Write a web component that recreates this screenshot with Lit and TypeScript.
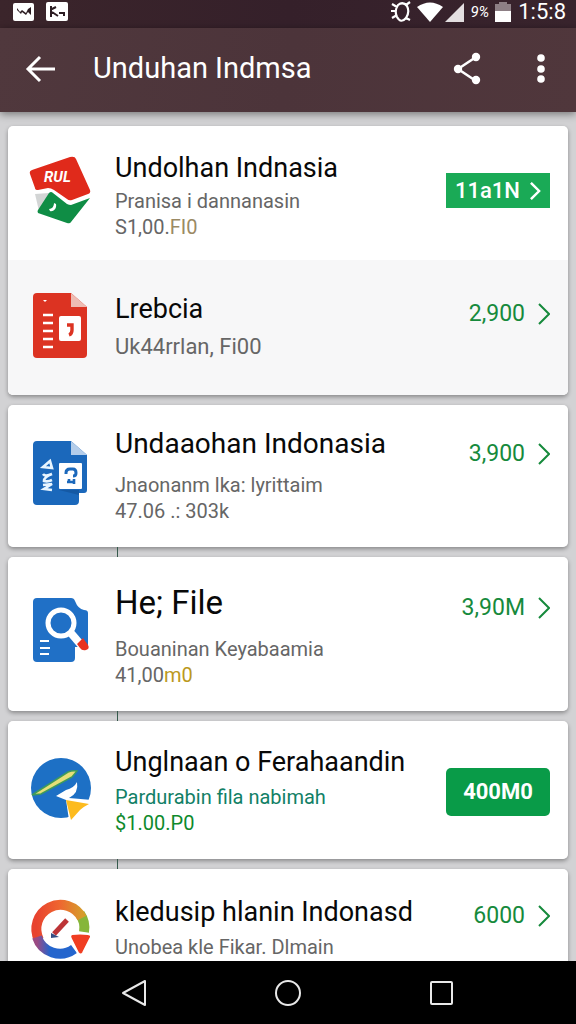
import { LitElement, html, css, svg, nothing, type TemplateResult } from "lit";
import { customElement } from "lit/decorators.js";

interface Line {
  text: string;
  accent?: string;
}

interface Item {
  kind: string;
  icon: TemplateResult;
  title: string;
  lines: Line[];
  value: string;
  badge?: "flat" | "round";
}

const pic = (label: string, body: unknown) =>
  html`<svg class="icon" viewBox="0 0 64 64" role="img" aria-label=${label}>${body}</svg>`;

const folded = pic("RUL", svg`
  <path d="M7 35l14-1 2 3-12 15z" fill="#d3d5d5"/>
  <path d="M2 15q-1-3 2-4L42-2q5-1 6 2l14 31q1 3-2 4l-16 6q-3 1-5-1L26 31q-3-2-6-2l-10 2q-3 0-3-2z" fill="#e02a1b"/>
  <path d="M10 54q-1-2 0-3l11-17q2-2 4 0l14 11q2 1 4 1l19-7-19 24q-1 2-4 1z" fill="#0f8d45"/>
  <path d="M21 50c4 0 5-4 5-6l2 1c1 5-3 8-6 7z" fill="#fff"/>
  <text x="16" y="23" class="glyph" fill="#fff">RUL</text>`);

const redDoc = pic("PDF", svg`
  <path d="M9 0h34l16 14v47q0 4-4 4H9q-4 0-4-4V4q0-4 4-4z" fill="#dc3322"/>
  <path d="M43 0l16 14H43z" fill="#eebcb3"/>
  <path d="M15 7h4l-2 2z" fill="#fff"/>
  <path d="M15 22h10M15 30h10M15 38h10M15 46h10M15 54h10" stroke="#fff" stroke-width="2.4"/>
  <rect x="31" y="23" width="22" height="25" rx="2" fill="#fff"/>
  <path d="M39 32h5v5q0 4-3 5" fill="none" stroke="#dc3322" stroke-width="3.4"/>`);

const blueDoc = pic("Dokumen", svg`
  <path d="M9 0h34l16 14v35q0 3-3 3h-5v8q0 4-4 4H9q-4 0-4-4V4q0-4 4-4z" fill="#1b68bb"/>
  <path d="M43 0l16 14H43z" fill="#b4cdea"/>
  <path d="M31 49h20v5z" fill="#1559a4"/>
  <rect x="31" y="22" width="23" height="26" rx="1" fill="#fff"/>
  <path d="M38 33v-1q0-4 4-4h3q3 0 3 4 0 3-3 3" fill="none" stroke="#1b68bb" stroke-width="3"/>
  <path d="M39 41h8M41 38v3M46 38v5" fill="none" stroke="#1b68bb" stroke-width="2.6"/>
  <path d="M22 20l-7 6 9 1zM15 33q2 3 9 0-8 3-8 7 4 1 8-1M15 44l9-1-8 5 8 1" fill="none" stroke="#e8f5ff" stroke-width="2.6"/>`);

const searchDoc = pic("Cari berkas", svg`
  <path d="M9 0h34q3 0 4 3 3 8 9 9 4 0 4 3v34H47v11q0 4-4 4H9q-4 0-4-4V4q0-4 4-4z" fill="#2070c6"/>
  <path d="M42 34L54 48" stroke="#fff" stroke-width="8"/>
  <circle cx="33" cy="25" r="13" fill="#2070c6" stroke="#fff" stroke-width="5"/>
  <path d="M49 46l6-6 5 7q2 4-2 5-4 1-6-2z" fill="#e8321f"/>
  <path d="M12 43h9M12 50h10M12 56h9" stroke="#fff" stroke-width="2"/>`);

const plane = pic("Kirim", svg`
  <circle cx="33" cy="32" r="30" fill="#1d70c5"/>
  <path d="M4 39L40 16q5-2 9-1l-5 6L13 38z" fill="#e5df77" stroke="#3e9a5c" stroke-width="1.5"/>
  <path d="M28 40l10-6q8-2 11-8 2 11-8 16l23 2v7L52 64H41l-3-20z" fill="#fff"/>
  <path d="M38 44l23 4q-6 3-9 6l-9 10z" fill="#fdbb1e"/>`);

const gauge = pic("Pengukur", svg`
  <defs>
    <linearGradient id="warm" x1="0" x2="1"><stop offset="0" stop-color="#e8432f"/><stop offset=".5" stop-color="#ef6530"/><stop offset="1" stop-color="#d79b2c"/></linearGradient>
    <linearGradient id="cool" x1="0" x2="1"><stop offset="0" stop-color="#9b4a83"/><stop offset=".35" stop-color="#2465cd"/></linearGradient>
  </defs>
  <g fill="none" stroke-width="10">
    <path d="M52 18A24 24 0 0 1 56 36" stroke="#86b63a"/>
    <path d="M11 44A24 24 0 0 1 54 22" stroke="url(#warm)"/>
    <path d="M9 41A24 24 0 0 0 46 53" stroke="url(#cool)"/>
  </g>
  <path d="M26 38L39 24" stroke="#bd3437" stroke-width="5"/>
  <path d="M23 37l8 4-8 1z" fill="#344e83"/>
  <path d="M44 38q8-1 16 0 5 1 2 5l-7 14q-2 3-5 0l-7-14q-2-4 1-5z" fill="#f03e22" stroke="#fff" stroke-width="2"/>`);

const chevron = html`<svg class="chevron" viewBox="0 0 12 22" aria-hidden="true"><path d="M1 1l10 10L1 21"/></svg>`;

const GROUPS: Item[][] = [
  [
    { kind: "lead", icon: folded, title: "Undolhan Indnasia", lines: [{ text: "Pranisa i dannanasin" }, { text: "S1,00.", accent: "FI0" }], value: "11a1N", badge: "flat" },
    { kind: "single", icon: redDoc, title: "Lrebcia", lines: [{ text: "Uk44rrlan, Fi00" }], value: "2,900" },
  ],
  [{ kind: "document", icon: blueDoc, title: "Undaaohan Indonasia", lines: [{ text: "Jnaonanm lka: lyrittaim" }, { text: "47.06 .: 303k" }], value: "3,900" }],
  [{ kind: "search", icon: searchDoc, title: "He; File", lines: [{ text: "Bouaninan Keyabaamia" }, { text: "41,00", accent: "m0" }], value: "3,90M" }],
  [{ kind: "promo", icon: plane, title: "Unglnaan o Ferahaandin", lines: [{ text: "Pardurabin fila nabimah" }, { text: "$1.00.P0" }], value: "400M0", badge: "round" }],
  [{ kind: "last", icon: gauge, title: "kledusip hlanin Indonasd", lines: [{ text: "Unobea kle Fikar. Dlmain" }], value: "6000" }],
];

@customElement("status-bar")
class StatusBar extends LitElement {
  static styles = css`
    :host { display: flex; align-items: center; height: 28px; padding: 0 10px 4px 13px; box-sizing: border-box; background: linear-gradient(90deg, #3b252b, #35202a 50%, #39242d); color: #fff; font-family: Roboto, sans-serif; }
    .note { width: 22px; height: 20px; margin-right: 11px; }
    .space { flex: 1; }
    .alarm { width: 20px; height: 22px; }
    .wifi { width: 26px; height: 20px; margin-left: 6px; }
    .cell { width: 19px; height: 20px; margin-left: 2px; }
    .percent { font-size: 15px; font-style: italic; margin: 0 6px; }
    .battery { width: 16px; height: 20px; margin-right: 7px; }
    .clock { font-size: 22px; line-height: 24px; }
  `;

  render() {
    return html`
      <svg class="note" viewBox="0 0 22 20" aria-hidden="true"><rect width="21" height="18" y="1" rx="2" fill="#fff"/><path d="M4 6l3 4 2-2 4 3 2-4 3-2v8l-3-3-2 3-4-3-1 2-4-4z" fill="#2c1c22"/></svg>
      <svg class="note" viewBox="0 0 22 20" aria-hidden="true"><rect width="22" height="19" rx="2" fill="#fff"/><path d="M5 4v11M6 7l4-2M6 10l6 4M13 11h5v3" fill="none" stroke="#2c1c22" stroke-width="2"/></svg>
      <span class="space"></span>
      <svg class="alarm" viewBox="0 0 20 22" aria-hidden="true"><path d="M7 4q5-4 9 1 3 6-1 12-5 6-9-1-3-6 1-12zM1 3l5 3M0 10h5M1 17l5-3M15 4l4-3M15 17l4 2" fill="none" stroke="#fff" stroke-width="2.2"/></svg>
      <svg class="wifi" viewBox="0 0 26 20" aria-hidden="true"><path d="M0 5q13-9 26 0L13 20z" fill="#fff"/></svg>
      <svg class="cell" viewBox="0 0 19 20" aria-hidden="true"><path d="M0 20L19 1v19z" fill="#e4dfe1"/></svg>
      <span class="percent">9%</span>
      <svg class="battery" viewBox="0 0 16 20" aria-hidden="true"><path d="M4 0h8v2h4v8H0V2h4z" fill="#8d7f85"/><path d="M0 9h16v11H0z" fill="#fff"/></svg>
      <span class="clock">1:5:8</span>
    `;
  }
}

@customElement("download-row")
class DownloadRow extends LitElement {
  static properties = { item: { attribute: false } };
  declare item: Item;

  static styles = css`
    :host { display: block; font-family: Roboto, sans-serif; }
    .row { display: flex; align-items: flex-start; padding: var(--top) 18px var(--bottom) 20px; --title: 27px; --line: 20px; }
    .icon { flex: none; width: 64px; height: 66px; margin-top: var(--icon); overflow: visible; }
    .glyph { font: italic 700 15px Roboto, sans-serif; }
    .body { flex: 1; min-width: 0; margin-left: 23px; white-space: nowrap; }
    .title { margin: 0 0 var(--gap); font-size: var(--title); line-height: 36px; font-weight: 400; color: #080808; }
    .line { margin: 0; font-size: var(--line); line-height: 26px; color: #666; font-weight: 400; }
    .accent { color: #9b8a64; }
    .action { display: flex; align-items: center; gap: 13px; margin: var(--action) 0 0; padding: 0; border: 0; background: none; color: #168a3c; font: 400 23px/28px Roboto, sans-serif; }
    .chevron { width: 12px; height: 22px; fill: none; stroke: currentColor; stroke-width: 2; }
    .flat, .round { box-sizing: border-box; width: 104px; justify-content: center; color: #fff; font-weight: 500; font-size: 22px; }
    .flat { height: 35px; gap: 9px; background: #1aaa56; }
    .flat .chevron { height: 18px; stroke-width: 3; }
    .round { height: 48px; border-radius: 5px; background: #099b48; font-weight: 700; }

    .lead { --top: 24px; --bottom: 20px; --gap: 2px; --icon: 8px; --action: 23px; }
    .single { --top: 31px; --bottom: 35px; --gap: 7px; --icon: 1px; --action: 9px; --line: 22px; background: #f7f7f8; }
    .document { --top: 21px; --bottom: 23px; --gap: 10px; --icon: 14px; --action: 14px; --title: 28px; }
    .search { --top: 28px; --bottom: 23px; --gap: 15px; --icon: 12px; --action: 9px; --title: 33px; }
    .search .accent { color: #bb991d; }
    .promo { --top: 23px; --bottom: 23px; --gap: 4px; --icon: 11px; --action: 24px; }
    .promo .line { color: #128066; }
    .promo .line + .line { color: #0e8a2c; }
    .last { --top: 25px; --bottom: 28px; --gap: 4px; --icon: 1px; --action: 8px; }
  `;

  render() {
    const { kind, icon, title, lines, value, badge } = this.item;
    return html`
      <article class="row ${kind}">
        ${icon}
        <div class="body">
          <h2 class="title">${title}</h2>
          ${lines.map((l) => html`<p class="line">${l.text}${l.accent ? html`<span class="accent">${l.accent}</span>` : nothing}</p>`)}
        </div>
        <button class="action ${badge ?? ""}" type="button">${value}${badge === "round" ? nothing : chevron}</button>
      </article>
    `;
  }
}

@customElement("app-root")
class AppRoot extends LitElement {
  static styles = css`
    :host { display: flex; flex-direction: column; height: 100vh; overflow: hidden; background: #d2d2d4; font-family: Roboto, sans-serif; }
    .bar { position: relative; display: flex; align-items: center; flex: none; height: 84px; padding: 0 25px 2px; box-sizing: border-box; background: linear-gradient(100deg, #50383d, #4c343a 50%, #50373c); box-shadow: 0 2px 8px rgba(0, 0, 0, .45); color: #fff; }
    .heading { flex: 1; margin: 0 0 2px 36px; font-size: 29px; line-height: 36px; font-weight: 400; white-space: nowrap; }
    .tool { display: flex; padding: 0; border: 0; background: none; color: inherit; }
    .tool svg { width: 32px; height: 34px; fill: none; stroke: currentColor; stroke-width: 3; }
    .share { margin-right: 47px; }
    .tool .dots { width: 20px; fill: currentColor; stroke: none; }
    .list { flex: 1; min-height: 0; overflow: hidden; padding: 14px 8px 0; }
    .card { border-radius: 5px; overflow: hidden; background: #fff; }
    .shade { border-radius: 5px; box-shadow: 0 2px 4px rgba(0, 0, 0, .35); }
    .link { width: 1px; height: 10px; margin-left: 109px; }
    .joined { background: #365a4c; }
    .nav { display: flex; flex: none; justify-content: center; align-items: center; gap: 126px; height: 63px; background: #000; color: #e8e8e8; }
    .nav .tool svg { width: 28px; height: 28px; stroke-width: 2; }
  `;

  render() {
    return html`
      <status-bar></status-bar>
      <header class="bar">
        <button class="tool" type="button" aria-label="Kembali"><svg viewBox="0 0 32 34"><path d="M3 17h27M15 5L3 17l12 12"/></svg></button>
        <h1 class="heading">Unduhan Indmsa</h1>
        <button class="tool share" type="button" aria-label="Bagikan"><svg viewBox="0 0 32 34"><path d="M24 5L6 17l18 12" stroke-width="2.5"/><g fill="currentColor" stroke="none"><circle cx="24" cy="5" r="4.2"/><circle cx="6" cy="17" r="4.2"/><circle cx="24" cy="28" r="4.2"/></g></svg></button>
        <button class="tool" type="button" aria-label="Menu"><svg class="dots" viewBox="0 0 20 34"><circle cx="10" cy="6" r="3.8"/><circle cx="10" cy="17" r="3.8"/><circle cx="10" cy="27" r="3.8"/></svg></button>
      </header>
      <main class="list">
        ${GROUPS.map((group, i) => html`
          ${i ? html`<div class="link ${i > 1 ? "joined" : ""}"></div>` : nothing}
          <div class="shade"><section class="card">${group.map((item) => html`<download-row .item=${item}></download-row>`)}</section></div>
        `)}
      </main>
      <nav class="nav">
        <button class="tool" type="button" aria-label="Kembali"><svg viewBox="0 0 28 28"><path d="M3 14L25 2v24z" stroke-linejoin="round"/></svg></button>
        <button class="tool" type="button" aria-label="Beranda"><svg viewBox="0 0 28 28"><circle cx="14" cy="14" r="12"/></svg></button>
        <button class="tool" type="button" aria-label="Terkini"><svg viewBox="0 0 28 28"><rect x="3" y="3" width="21" height="22" rx="1"/></svg></button>
      </nav>
    `;
  }
}
